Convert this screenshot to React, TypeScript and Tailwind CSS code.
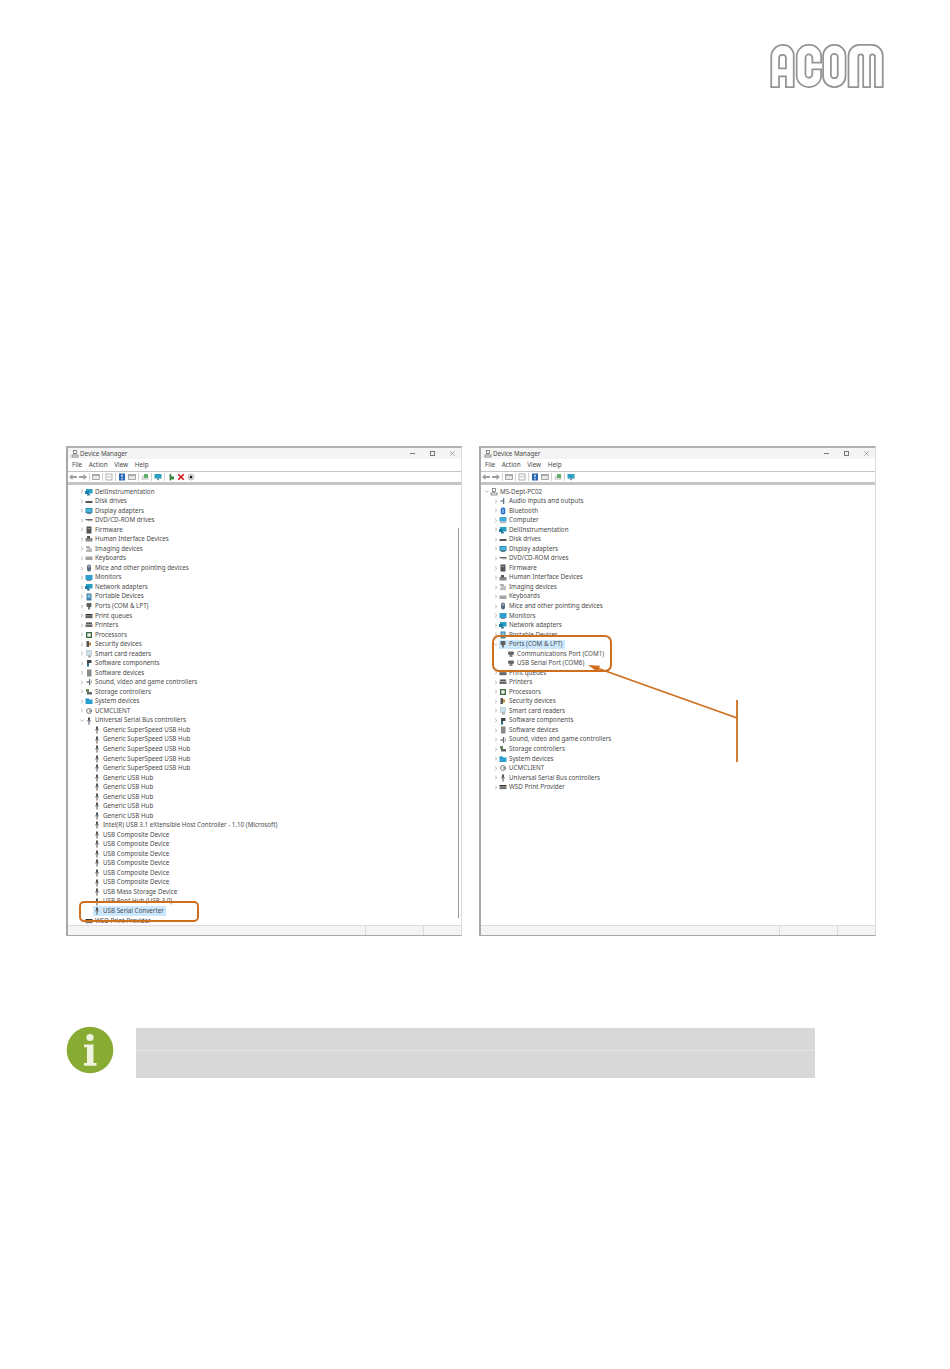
import type { ReactNode } from "react";

type Row = { label: string; icon: string; level: 0 | 1 | 2; chevron?: "right" | "down"; selected?: boolean };

const ORANGE = "#cf6f1d";

function DeviceIcon({ kind }: { kind: string }) {
  const shapes: Record<string, ReactNode> = {
    dell: (<><rect x="1" y="1" width="6.5" height="4.5" fill="#2a9fc4" /><rect x="0" y="3" width="4" height="3" fill="#1d7fa8" /><rect x="2" y="6" width="3" height="1.5" fill="#4a7f9a" /></>),
    disk: (<rect x="0.5" y="4" width="7" height="2" fill="#555" />),
    display: (<><rect x="0.5" y="1" width="7" height="5" fill="#2b8fb8" /><rect x="1.5" y="2" width="5" height="3" fill="#4fb4d8" /><rect x="2" y="6" width="4" height="1" fill="#777" /></>),
    dvd: (<><rect x="0.5" y="3" width="7" height="1.2" fill="#666" /><rect x="2.5" y="4.2" width="5" height="1" fill="#999" /></>),
    firmware: (<><rect x="1.5" y="0.5" width="5" height="7" fill="#555" /><rect x="2.5" y="2" width="3" height="1" fill="#999" /></>),
    hid: (<><rect x="0.5" y="3" width="7" height="3.5" fill="#8a8a8a" /><rect x="2" y="1" width="3" height="2.5" fill="#555" /></>),
    imaging: (<><rect x="1" y="1.5" width="4" height="1" fill="#666" /><rect x="2" y="3.5" width="5" height="1" fill="#888" /><rect x="1" y="5.5" width="6" height="1" fill="#777" /></>),
    keyboard: (<rect x="0.5" y="2.5" width="7" height="3.5" fill="#a3a3a3" />),
    mice: (<><rect x="2" y="0.5" width="4" height="7" rx="2" fill="#5b6b84" /><rect x="3.5" y="1.5" width="1" height="2" fill="#ddd" /></>),
    monitor: (<><rect x="0.5" y="1" width="7" height="5" fill="#2f9fd0" /><rect x="2" y="6" width="4" height="1" fill="#888" /></>),
    portable: (<><rect x="1.5" y="0.5" width="5" height="7" fill="#3f7f9f" /><rect x="2.5" y="1.5" width="3" height="3.5" fill="#7fc0dc" /></>),
    ports: (<><rect x="1.5" y="1" width="5" height="4" rx="1" fill="#5d5d5d" /><rect x="3" y="5" width="2" height="2.5" fill="#777" /></>),
    port: (<><rect x="1" y="1.5" width="6" height="3.5" rx="1.4" fill="#666" /><rect x="2.5" y="5" width="3" height="2" fill="#888" /></>),
    queue: (<><rect x="0.5" y="2" width="7" height="1.2" fill="#333" /><rect x="0.5" y="3.2" width="7" height="3" fill="#666" /></>),
    printer: (<><rect x="1" y="1.5" width="6" height="1.4" fill="#444" /><rect x="0.5" y="3.4" width="7" height="2.6" fill="#6a6a6a" /></>),
    cpu: (<><rect x="1" y="1" width="6" height="6" fill="#3b6b3b" /><rect x="2.3" y="2.3" width="3.4" height="3.4" fill="#f0f0f0" /></>),
    security: (<><rect x="1.5" y="1" width="2.5" height="6" fill="#555" /><rect x="4" y="2.5" width="2" height="3" fill="#c08a30" /></>),
    smartcard: (<><rect x="1.5" y="0.5" width="5" height="5" fill="#c9dfea" stroke="#8aa" strokeWidth="0.4" /><rect x="3" y="5.5" width="3" height="2" fill="#aaa" /></>),
    softcomp: (<><rect x="2" y="1" width="4.5" height="3" fill="#444" /><rect x="2" y="4" width="2" height="3.5" fill="#2a6a8a" /></>),
    softdev: (<rect x="2" y="0.5" width="4.5" height="7" fill="#8a8a8a" />),
    sound: (<><rect x="4" y="1" width="1.2" height="6" fill="#666" /><rect x="1.5" y="3" width="2.5" height="2" fill="#999" /><rect x="6" y="2.5" width="1" height="3" fill="#aaa" /></>),
    storage: (<><rect x="1" y="1" width="3" height="3" fill="#6a8a5a" /><rect x="2" y="4" width="5" height="2.5" fill="#666" /></>),
    system: (<><rect x="0.5" y="1.5" width="3.5" height="1.5" fill="#1b8ac0" /><rect x="0.5" y="2.5" width="7" height="4.5" fill="#2a9fd0" /></>),
    ucm: (<><circle cx="4" cy="4" r="2.4" fill="none" stroke="#666" strokeWidth="0.9" /><rect x="4" y="3.5" width="3" height="1" fill="#666" /></>),
    usb: (<><rect x="3" y="0.5" width="2" height="3" fill="#555" /><rect x="2.4" y="3" width="3.2" height="1.6" fill="#777" /><rect x="3.5" y="4.6" width="1" height="3" fill="#555" /></>),
    wsd: (<><rect x="0.5" y="2" width="7" height="1.2" fill="#333" /><rect x="0.5" y="3.2" width="7" height="3" fill="#777" /></>),
    audio: (<><rect x="4" y="1" width="1.3" height="6" fill="#678" /><rect x="1.5" y="3" width="2.5" height="2" fill="#9ab" /></>),
    bluetooth: (<><rect x="1.7" y="0.5" width="4.6" height="7" rx="2.2" fill="#1f6fd0" /><rect x="3.6" y="2" width="0.8" height="4" fill="#fff" /></>),
    computer: (<><rect x="0.5" y="1" width="7" height="4.6" fill="#41a9d8" /><rect x="1" y="5.8" width="6" height="1.4" fill="#bbb" /></>),
    root: (<><rect x="2.5" y="0.5" width="3" height="3" fill="none" stroke="#666" strokeWidth="0.7" /><rect x="1" y="5" width="6" height="2" fill="none" stroke="#666" strokeWidth="0.7" /><rect x="3.6" y="3.5" width="0.8" height="1.5" fill="#666" /></>),
  };
  return (
    <svg width="8" height="8" viewBox="0 0 8 8" className="shrink-0">
      {shapes[kind]}
    </svg>
  );
}

function Chevron({ dir }: { dir?: "right" | "down" }) {
  if (!dir) return <span className="w-[3px] shrink-0" />;
  return (
    <svg width="4" height="5" viewBox="0 0 4 5" className="shrink-0">
      <path d={dir === "right" ? "M1 .8 2.9 2.5 1 4.2" : "M.3 1.5 2 3.3 3.7 1.5"} fill="none" stroke="#8a8a8a" strokeWidth="0.6" />
    </svg>
  );
}

const common: [string, string][] = [
  ["DellInstrumentation", "dell"],
  ["Disk drives", "disk"],
  ["Display adapters", "display"],
  ["DVD/CD-ROM drives", "dvd"],
  ["Firmware", "firmware"],
  ["Human Interface Devices", "hid"],
  ["Imaging devices", "imaging"],
  ["Keyboards", "keyboard"],
  ["Mice and other pointing devices", "mice"],
  ["Monitors", "monitor"],
  ["Network adapters", "dell"],
  ["Portable Devices", "portable"],
];

const common2: [string, string][] = [
  ["Print queues", "queue"],
  ["Printers", "printer"],
  ["Processors", "cpu"],
  ["Security devices", "security"],
  ["Smart card readers", "smartcard"],
  ["Software components", "softcomp"],
  ["Software devices", "softdev"],
  ["Sound, video and game controllers", "sound"],
  ["Storage controllers", "storage"],
  ["System devices", "system"],
  ["UCMCLIENT", "ucm"],
];

const top = (list: [string, string][]): Row[] =>
  list.map(([label, icon]) => ({ label, icon, level: 1, chevron: "right" }));

const usbChild = (label: string, selected = false): Row => ({ label, icon: "usb", level: 2, selected });

const leftRows: Row[] = [
  ...top(common),
  { label: "Ports (COM & LPT)", icon: "ports", level: 1, chevron: "right" },
  ...top(common2),
  { label: "Universal Serial Bus controllers", icon: "usb", level: 1, chevron: "down" },
  ...Array.from({ length: 5 }, () => usbChild("Generic SuperSpeed USB Hub")),
  ...Array.from({ length: 5 }, () => usbChild("Generic USB Hub")),
  usbChild("Intel(R) USB 3.1 eXtensible Host Controller - 1.10 (Microsoft)"),
  ...Array.from({ length: 6 }, () => usbChild("USB Composite Device")),
  usbChild("USB Mass Storage Device"),
  usbChild("USB Root Hub (USB 3.0)"),
  usbChild("USB Serial Converter", true),
  { label: "WSD Print Provider", icon: "wsd", level: 1 },
];

const rightRows: Row[] = [
  { label: "MS-Dept-PC02", icon: "root", level: 0, chevron: "down" },
  ...top([["Audio inputs and outputs", "audio"], ["Bluetooth", "bluetooth"], ["Computer", "computer"]]),
  ...top(common),
  { label: "Ports (COM & LPT)", icon: "ports", level: 1, chevron: "down", selected: true },
  { label: "Communications Port (COM1)", icon: "port", level: 2 },
  { label: "USB Serial Port (COM6)", icon: "port", level: 2 },
  ...top(common2),
  ...top([["Universal Serial Bus controllers", "usb"], ["WSD Print Provider", "wsd"]]),
];

function TreeRow({ row, rootOffset }: { row: Row; rootOffset: boolean }) {
  const pad = rootOffset
    ? row.level === 0 ? "pl-[4px]" : row.level === 1 ? "pl-[13px]" : "pl-[22px]"
    : row.level === 1 ? "pl-[12px]" : "pl-[21px]";
  return (
    <div className={`flex h-[9.54px] items-center gap-[1px] leading-none ${pad}`}>
      <Chevron dir={row.level === 2 ? undefined : row.chevron ?? "right"} />
      <span className={`flex h-full items-center gap-[1px] pr-[2px] ${row.selected ? "bg-[#cce8ff]" : ""}`}>
        <DeviceIcon kind={row.icon} />
        <span className="ml-[1px] whitespace-nowrap">{row.label}</span>
      </span>
    </div>
  );
}

function ToolIcon({ children }: { children: ReactNode }) {
  return (
    <svg width="8" height="8" viewBox="0 0 8 8" className="shrink-0">
      {children}
    </svg>
  );
}

function Sep() {
  return <span className="h-[8px] w-px shrink-0 bg-[#cfcfcf]" />;
}

function Toolbar({ full }: { full: boolean }) {
  return (
    <div className="flex h-[12px] items-center gap-[2px] border-y border-[#c4c4c4] pl-[1px]">
      <ToolIcon><path d="M0 4 3.5 1v2H8v2H3.5v2z" fill="#a0a0a0" /></ToolIcon>
      <ToolIcon><path d="M8 4 4.5 1v2H0v2h4.5v2z" fill="#a0a0a0" /></ToolIcon>
      <Sep />
      <ToolIcon><rect x=".5" y="1.5" width="7" height="5" fill="#e8e8e8" stroke="#9a9a9a" strokeWidth=".8" /><rect x="1" y="2" width="6" height="1" fill="#aaa" /></ToolIcon>
      <Sep />
      <ToolIcon><rect x="1" y="1" width="6" height="6" fill="#fff" stroke="#9a9a9a" strokeWidth=".8" /><rect x="2" y="3.5" width="4" height=".8" fill="#aaa" /></ToolIcon>
      <Sep />
      <ToolIcon><rect x="1" y=".5" width="6" height="7" fill="#2a64b4" /><rect x="3.3" y="1.5" width="1.4" height="2.6" fill="#dfe9f7" /><rect x="3.3" y="5" width="1.4" height="1.4" fill="#dfe9f7" /></ToolIcon>
      <ToolIcon><rect x=".5" y="1.5" width="7" height="5" fill="#e8e8e8" stroke="#9a9a9a" strokeWidth=".8" /><rect x="1" y="2" width="6" height="1" fill="#aaa" /></ToolIcon>
      <Sep />
      <ToolIcon><rect x=".5" y="2.5" width="7" height="4.5" fill="#d9d9d9" /><rect x="3" y="1" width="4" height="4" fill="#5fb06a" /></ToolIcon>
      <Sep />
      <ToolIcon><rect x=".5" y="1" width="7" height="4.6" fill="#2f9fc4" /><rect x="3" y="5.6" width="2" height="1.6" fill="#6f8f9f" /></ToolIcon>
      {full && (
        <>
          <Sep />
          <ToolIcon><rect x="2.6" y="1" width="1.6" height="6.4" fill="#2e7d32" /><rect x="4" y="3.4" width="3" height="3" fill="#3c8c40" /></ToolIcon>
          <ToolIcon><path d="M1.2 1.2 6.8 6.8M6.8 1.2 1.2 6.8" stroke="#d01818" strokeWidth="1.6" /></ToolIcon>
          <ToolIcon><circle cx="4" cy="4" r="3" fill="#fff" stroke="#999" strokeWidth=".7" /><circle cx="4" cy="4" r="1.5" fill="#222" /></ToolIcon>
        </>
      )}
    </div>
  );
}

function DeviceWindow({ rows, full, rootOffset, width, children }: { rows: Row[]; full: boolean; rootOffset: boolean; width: string; children?: ReactNode }) {
  return (
    <div className={`relative h-[490px] ${width} shrink-0 border-y border-r border-l-2 border-t-2 border-b-[#a8a8a8] border-l-[#a8a8a8] border-r-[#dcdcdc] border-t-[#b0b0b0] bg-white font-['Noto_Sans',sans-serif] text-[6.25px] text-[#4a4a4a]`}>
      <div className="flex h-[11px] items-center justify-between bg-[#f4f4f4] pl-[3px] pr-[6px]">
        <div className="flex items-center gap-[1px]">
          <DeviceIcon kind="root" />
          <span>Device Manager</span>
        </div>
        <div className="flex items-center gap-[15px]">
          <span className="h-px w-[5px] bg-[#777]" />
          <span className="h-[5px] w-[5px] border border-[#777]" />
          <svg width="5" height="5" viewBox="0 0 5 5">
            <path d="M.3.3 4.7 4.7M4.7.3.3 4.7" stroke="#777" strokeWidth="0.6" />
          </svg>
        </div>
      </div>
      <div className="flex h-[12px] items-center gap-[6.5px] pl-[4px] text-[6.4px]">
        <span>File</span>
        <span>Action</span>
        <span>View</span>
        <span>Help</span>
      </div>
      <Toolbar full={full} />
      <div className="border-t-2 border-[#c4c4c4] bg-white pt-[2px]">
        <div className="h-[439px] overflow-hidden">
          {rows.map((row, i) => (
            <TreeRow key={i} row={row} rootOffset={rootOffset} />
          ))}
        </div>
      </div>
      <div className="absolute inset-x-0 bottom-0 flex h-[10px] justify-end border-t border-[#dcdcdc] bg-[#f4f4f4]">
        <span className="w-[58px] border-l border-[#dcdcdc]" />
        <span className="w-[38px] border-l border-[#dcdcdc]" />
      </div>
      {children}
    </div>
  );
}

function Logo() {
  return (
    <svg width="114" height="45" viewBox="0 0 116 46" fill="none" stroke="#949494" strokeWidth="1.8">
      <path d="M1 44V13A12 12 0 0 1 13 1a11 11 0 0 1 11 12v31h-8V33H9v11z" />
      <path d="M9 25V14c0-4 7-4 7 0v11z" />
      <path d="M27 14a12 12 0 0 1 12-13h1a12 12 0 0 1 12 13v5h-9v-5a3.5 3.5 0 0 0-7 0v17a3.5 3.5 0 0 0 7 0v-5h9v5a12 12 0 0 1-12 13h-1a12 12 0 0 1-12-13z" />
      <rect x="54" y="1" width="23" height="43" rx="11" />
      <rect x="62" y="10" width="7" height="25" rx="3.4" />
      <path d="M80 44V12A11 11 0 0 1 91 1h13a11 11 0 0 1 11 11v32h-8V13a2.5 2.5 0 0 0-5 0v31h-7V13a2.5 2.5 0 0 0-5 0v31z" />
    </svg>
  );
}

export default function App() {
  return (
    <div className="flex h-[1369px] w-[950px] flex-col overflow-hidden bg-white">
      <div className="flex justify-end pr-[66px] pt-[44px]">
        <Logo />
      </div>

      <div className="mt-[357px] flex gap-[17px] pl-[66px]">
        <DeviceWindow rows={leftRows} full rootOffset={false} width="w-[396px]">
          <span className="absolute left-[390px] top-[80px] h-[390px] w-px bg-[#9a9a9a]" />
          <span className="absolute left-[11px] top-[453px] h-[21px] w-[120px] rounded-[5px] border-2" style={{ borderColor: ORANGE }} />
        </DeviceWindow>
        <DeviceWindow rows={rightRows} full={false} rootOffset width="w-[397px]">
          <span className="absolute left-[11px] top-[187px] h-[37px] w-[120px] rounded-[7px] border-2" style={{ borderColor: ORANGE }} />
          <svg className="absolute left-[100px] top-[205px]" width="170" height="115" viewBox="0 0 170 115" fill="none">
            <path d="M156 47V109" stroke={ORANGE} strokeWidth="1.8" />
            <path d="M156 65 16 15" stroke={ORANGE} strokeWidth="1.8" />
            <path d="M7 12 19 12.7 16.8 19.3z" fill={ORANGE} />
          </svg>
        </DeviceWindow>
      </div>

      <div className="mt-[90px] flex items-start gap-[22px] pl-[66px]">
        <svg width="48" height="48" viewBox="0 0 48 48" className="shrink-0">
          <circle cx="24" cy="24" r="23.3" fill="#88ab33" />
          <circle cx="24" cy="11.5" r="3.6" fill="#eef4e0" />
          <path d="M18 18.5h9.5v18.5h3v2.8H18V37h3V21.3h-3z" fill="#eef4e0" />
        </svg>
        <div className="mt-[2px] w-[679px] bg-[#d8d8d8]">
          <div className="h-[23px] border-b border-[#e4e4e4]" />
          <div className="h-[27px]" />
        </div>
      </div>
    </div>
  );
}
